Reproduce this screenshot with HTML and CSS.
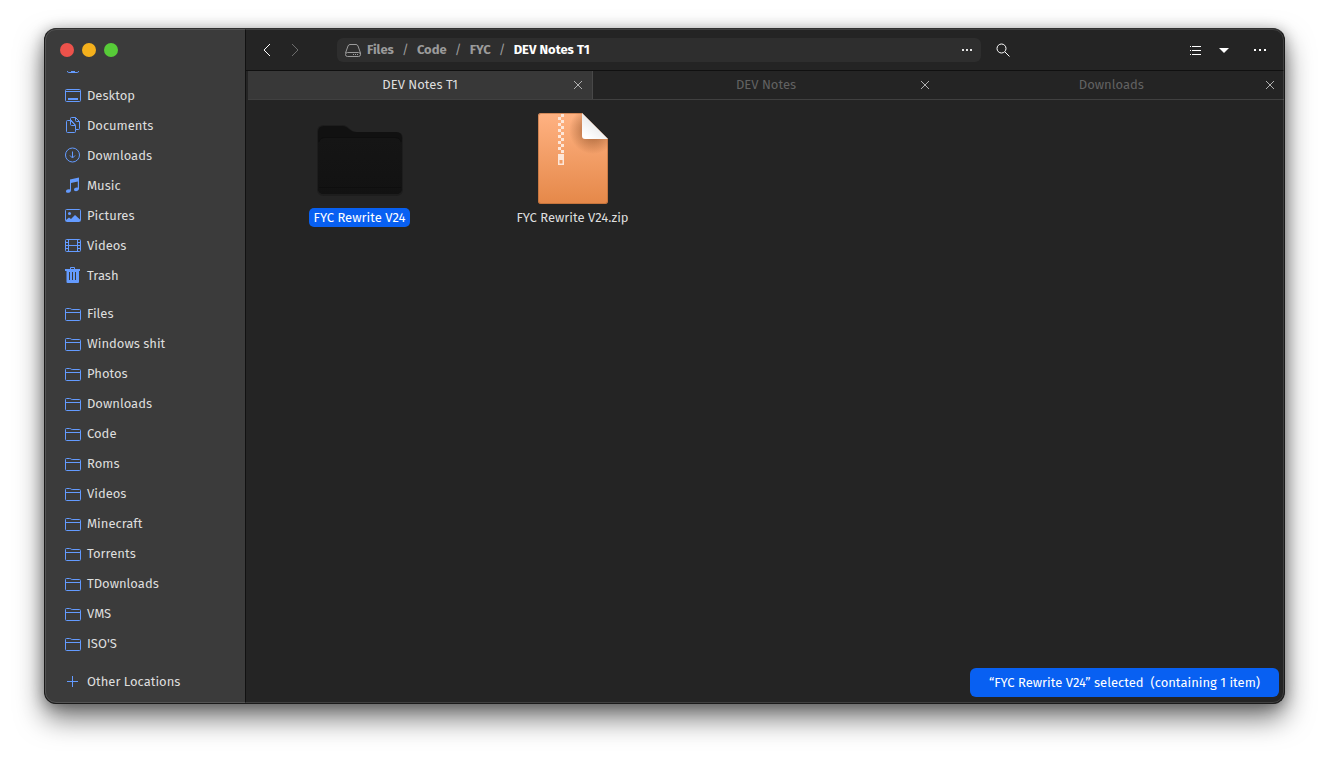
FILE: index.html
```html
<!DOCTYPE html>
<html lang="en">
<head>
<meta charset="utf-8">
<title>DEV Notes T1</title>
<link rel="stylesheet" href="styles.css">
</head>
<body>
<svg class="defs" aria-hidden="true">
  <symbol id="folder" viewBox="0 0 16 16"><path d="M.5 14.500v-10q0-1 1-1h3.200q.8 0 1.300.5t1.200.5h7.300q1 0 1 1v9q0 1-1 1h-13q-1 0-1-1zM1 7.500h14"/></symbol>
  <symbol id="close" viewBox="0 0 10 10"><path d="M1 1l8 8M9 1l-8 8"/></symbol>
</svg>
<div class="window">
  <aside class="sidebar">
    <div class="controls">
      <button class="dot red" aria-label="Close"></button>
      <button class="dot yellow" aria-label="Minimize"></button>
      <button class="dot green" aria-label="Maximize"></button>
    </div>
    <nav class="places" aria-label="Places">
      <div class="scroll">
        <ul class="group">
          <li><a class="place" href="#" aria-label="Home"><svg class="icon" viewBox="0 0 16 16"><path d="M1 8l7-7 7 7M2.500 7v7q0 1.500 1 1.500h9q1 0 1-1.500V7"/><path class="solid" d="M6 10h4v5H6z"/></svg></a></li>
          <li><a class="place" href="#"><svg class="icon" viewBox="0 0 16 16"><rect x=".5" y="2.500" width="15" height="12" rx="1"/><path d="M1 4.500h14"/><path class="solid" d="M3 11h10v2H3z"/></svg>Desktop</a></li>
          <li><a class="place" href="#"><svg class="icon" viewBox="0 0 16 16"><path d="M5.500 3.500h-3q-1 0-1 1v10q0 1 1 1h7q1 0 1-1v-2M5.500 3.500v-2q0-1 1-1h4l4 4v7q0 1-1 1h-3V8.500l-5-5M5.500 3.500v4q0 1 1 1h4M10.500.5v3q0 1 1 1h3M6 3l4.500 5"/></svg>Documents</a></li>
          <li><a class="place" href="#"><svg class="icon" viewBox="0 0 16 16"><circle cx="7.500" cy="8" r="7"/><path d="M7.500 4.500v6M5 8.500l2.500 2.500L10 8.500"/></svg>Downloads</a></li>
          <li><a class="place" href="#"><svg class="icon" viewBox="0 0 16 16"><path class="solid" d="M5 2.500L14 .5v11c0 3-5 3.500-5 1.200 0-1.700 2-2.400 3.800-2V4.500L6 6v7.200c0 3-5 3.500-5 1.200 0-1.800 2-2.500 4-2z"/></svg>Music</a></li>
          <li><a class="place" href="#"><svg class="icon" viewBox="0 0 16 16"><rect x=".5" y="2.500" width="15" height="12" rx="1"/><circle class="solid" cx="4.500" cy="6.500" r="1.500"/><path class="solid" d="M1 13l3-2.500 2 1.500 4-4 5 4.500V14H1z"/></svg>Pictures</a></li>
          <li><a class="place" href="#"><svg class="icon" viewBox="0 0 16 16"><rect x=".5" y="2.500" width="15" height="12" rx="1"/><path d="M3.500 2.500v12M12.500 2.500v12M3.500 8.500h9M1 5.500h2M1 8.500h2M1 11.500h2M13 5.500h2M13 8.500h2M13 11.500h2"/></svg>Videos</a></li>
          <li><a class="place" href="#"><svg class="icon" viewBox="0 0 16 16"><path class="solid" fill-rule="evenodd" d="M0 2h5V1q0-1 1-1h3q1 0 1 1v1h5v2h-1v11q0 1-1 1H2.500q-1 0-1-1V4H0zM6 1v1h3V1zM4 5v8h1V5zM7 5v8h1V5zM10 5v8h1V5z"/></svg>Trash</a></li>
        </ul>
        <ul class="group">
          <li><a class="place" href="#"><svg class="icon"><use href="#folder"/></svg>Files</a></li>
          <li><a class="place" href="#"><svg class="icon"><use href="#folder"/></svg>Windows shit</a></li>
          <li><a class="place" href="#"><svg class="icon"><use href="#folder"/></svg>Photos</a></li>
          <li><a class="place" href="#"><svg class="icon"><use href="#folder"/></svg>Downloads</a></li>
          <li><a class="place" href="#"><svg class="icon"><use href="#folder"/></svg>Code</a></li>
          <li><a class="place" href="#"><svg class="icon"><use href="#folder"/></svg>Roms</a></li>
          <li><a class="place" href="#"><svg class="icon"><use href="#folder"/></svg>Videos</a></li>
          <li><a class="place" href="#"><svg class="icon"><use href="#folder"/></svg>Minecraft</a></li>
          <li><a class="place" href="#"><svg class="icon"><use href="#folder"/></svg>Torrents</a></li>
          <li><a class="place" href="#"><svg class="icon"><use href="#folder"/></svg>TDownloads</a></li>
          <li><a class="place" href="#"><svg class="icon"><use href="#folder"/></svg>VMS</a></li>
          <li><a class="place" href="#"><svg class="icon"><use href="#folder"/></svg>ISO'S</a></li>
        </ul>
        <ul class="group">
          <li><a class="place" href="#"><svg class="icon" viewBox="0 0 16 16"><path d="M7.500 3v11M2 8.500h11"/></svg>Other Locations</a></li>
        </ul>
      </div>
    </nav>
  </aside>
  <main class="main">
    <header class="toolbar">
      <button class="tool" aria-label="Back"><svg class="glyph" viewBox="0 0 16 16"><path d="M11 2L5 8l6 6"/></svg></button>
      <button class="tool" aria-label="Forward" disabled><svg class="glyph" viewBox="0 0 16 16"><path d="M5 2l6 6-6 6"/></svg></button>
      <nav class="pathbar" aria-label="Path">
        <svg class="drive" viewBox="0 0 16 16"><path d="M.5 11L3 4q.6-1.500 2-1.500h6q1.400 0 2 1.500l2.500 7v1.500q0 2-2 2h-11q-2 0-2-2 0-2 2-2h11q2 0 2 2"/><path d="M8 12.500h1M10 12.500h1M12 12.500h1"/></svg>
        <a class="crumb" href="#">Files</a><span class="slash">/</span>
        <a class="crumb" href="#">Code</a><span class="slash">/</span>
        <a class="crumb" href="#">FYC</a><span class="slash">/</span>
        <a class="crumb current" href="#" aria-current="page">DEV Notes T1</a>
        <button class="more" aria-label="Folder menu"><svg class="glyph" viewBox="0 0 16 16"><path class="solid" d="M3 7h2v2H3zM7 7h2v2H7zM11 7h2v2h-2z"/></svg></button>
      </nav>
      <button class="tool search" aria-label="Search"><svg class="glyph" viewBox="0 0 16 16"><circle cx="6.500" cy="6.500" r="4.500"/><path d="M10 10l4.500 4.500"/></svg></button>
      <div class="views">
        <button class="tool" aria-label="List view"><svg class="glyph" viewBox="0 0 16 16"><path d="M2 4.500h1M4 4.500h9M2 8.500h1M4 8.500h9M2 12.500h1M4 12.500h9"/></svg></button>
        <button class="tool" aria-label="View options"><svg class="glyph" viewBox="0 0 16 16"><path class="solid" d="M3 6h10l-5 5z"/></svg></button>
        <button class="tool menu" aria-label="Menu"><svg class="glyph" viewBox="0 0 16 16"><path class="solid" d="M2 7h2v2H2zM7 7h2v2H7zM12 7h2v2h-2z"/></svg></button>
      </div>
    </header>
    <div class="tabs">
      <div class="tab active"><button class="title">DEV Notes T1</button><button class="close" aria-label="Close DEV Notes T1"><svg class="cross"><use href="#close"/></svg></button></div>
      <div class="tab"><button class="title">DEV Notes</button><button class="close" aria-label="Close DEV Notes"><svg class="cross"><use href="#close"/></svg></button></div>
      <div class="tab"><button class="title">Downloads</button><button class="close" aria-label="Close Downloads"><svg class="cross"><use href="#close"/></svg></button></div>
    </div>
    <section class="files" aria-label="Files">
      <a class="file selected" href="#">
        <svg class="thumb" viewBox="0 0 96 96">
          <defs><linearGradient id="front" x2="0" y2="1"><stop offset="0" stop-color="#151515"/><stop offset="1" stop-color="#121212"/></linearGradient></defs>
          <path fill="#1d1d1d" d="M5 22q0-7 7-7h18c7 0 8 7 15 7h39q7 0 7 7v50q0 7-7 7H12q-7 0-7-7z"/>
          <path fill="#111" d="M6 22q0-6 6-6h18c7 0 7 6 14 6h40q6 0 6 6v50q0 6-6 6H12q-6 0-6-6z"/>
          <rect x="6" y="28" width="84" height="56" rx="6" fill="url(#front)"/>
          <path stroke="#0e0e0e" fill="none" d="M7 32q1-4.500 6-4.500h70q5 0 6 4.500M7 77.500h82"/>
        </svg>
        <span class="name">FYC Rewrite V24</span>
      </a>
      <a class="file" href="#">
        <svg class="thumb" viewBox="0 0 96 96">
          <defs>
            <linearGradient id="paper" x2="0" y2="1"><stop offset="0" stop-color="#ffb282"/><stop offset="1" stop-color="#e58849"/></linearGradient>
            <linearGradient id="fold" x1="1" y1="0" x2="0.300" y2="1"><stop offset="0" stop-color="#d8d8d8"/><stop offset="1" stop-color="#fff"/></linearGradient>
            <radialGradient id="shade"><stop offset=".3" stop-color="#7a4019" stop-opacity=".5"/><stop offset="1" stop-color="#7a4019" stop-opacity="0"/></radialGradient>
            <clipPath id="sheet"><path d="M13 6q0-3 3-3h41l26 26v62q0 3-3 3H16q-3 0-3-3z"/></clipPath>
          </defs>
          <g clip-path="url(#sheet)">
            <path fill="url(#paper)" d="M13 3h70v91H13z"/>
            <circle cx="68" cy="20" r="24" fill="url(#shade)"/>
          </g>
          <path d="M57 3l26 26H60q-3 0-3-3z" fill="url(#fold)"/>
          <path d="M34.500 4v39" stroke="#fde6d8" stroke-width="3" stroke-dasharray="3 3" stroke-dashoffset="3"/>
          <path d="M37.500 4v39" stroke="#fde6d8" stroke-width="3" stroke-dasharray="3 3"/>
          <path fill="#fde6d8" fill-rule="evenodd" d="M33 44h6v11h-6zM34.500 50v3.500h3V50z"/>
          <path d="M13.500 6q0-2.500 2.500-2.500h41M82.500 29v62q0 2.500-2.500 2.500H16q-2.500 0-2.500-2.500V6" fill="none" stroke="#a85f30" stroke-opacity=".5"/>
        </svg>
        <span class="name">FYC Rewrite V24.zip</span>
      </a>
    </section>
    <div class="status" role="status">“FYC Rewrite V24” selected&nbsp; (containing 1 item)</div>
  </main>
</div>
</body>
</html>
```
FILE: styles.css
```css
* { box-sizing: border-box; }

body {
  margin: 0;
  height: 100vh;
  padding: 28px 44px 60px;
  background: #fff;
  font: 13px/20px "Fira Sans", Roboto, sans-serif;
  color: #dedede;
}

button {
  border: 0;
  padding: 0;
  background: none;
  color: inherit;
  font: inherit;
}

a { color: inherit; text-decoration: none; }

.defs { display: none; }

.window {
  position: relative;
  display: flex;
  height: 100%;
  border: 1px solid #1a1a1a;
  border-top-color: #303030;
  border-radius: 12px;
  overflow: hidden;
  background: #242424;
  box-shadow: 0 14px 28px rgba(0, 0, 0, .55), 0 2px 14px rgba(0, 0, 0, .3);
}

.window::after {
  content: "";
  position: absolute;
  inset: 0;
  border: 1px solid rgba(255, 255, 255, .13);
  border-radius: 11px;
  pointer-events: none;
}

.sidebar {
  display: flex;
  flex-direction: column;
  flex: none;
  width: 201px;
  border-right: 1px solid #111;
  background: #3b3b3b;
}

.controls {
  display: flex;
  flex: none;
  align-items: center;
  gap: 8px;
  height: 42px;
  padding-left: 15px;
}

.dot { width: 14px; height: 14px; border-radius: 50%; }
.red { background: #ec524b; }
.yellow { background: #f4b01c; }
.green { background: #57cb38; }

.places { flex: 1; overflow: hidden; }

.scroll {
  display: flex;
  flex-direction: column;
  gap: 8px;
  margin-top: -20px;
}

.group { margin: 0; padding: 0; list-style: none; }

.place {
  display: flex;
  align-items: center;
  gap: 6px;
  height: 30px;
  padding-left: 20px;
}

.icon {
  width: 16px;
  height: 16px;
  margin-bottom: 2px;
  fill: none;
  stroke: #649bff;
}

.icon .solid { fill: #649bff; stroke: none; }

.main {
  position: relative;
  display: flex;
  flex: 1;
  flex-direction: column;
  min-width: 0;
}

.toolbar {
  display: flex;
  flex: none;
  align-items: center;
  height: 42px;
  padding: 0 10px 0 7px;
  border-bottom: 1px solid #101010;
}

.tool {
  display: grid;
  flex: none;
  place-items: center;
  width: 28px;
  height: 28px;
  color: #fff;
}

.tool:disabled { color: #6c6c6c; }

.glyph {
  width: 16px;
  height: 16px;
  fill: none;
  stroke: currentColor;
}

.glyph .solid { fill: currentColor; stroke: none; }

.pathbar {
  display: flex;
  flex: 0 1 644px;
  align-items: center;
  min-width: 0;
  height: 24px;
  margin-left: 28px;
  padding: 0 6px 0 8px;
  border-radius: 6px;
  background: #2e2e2e;
  color: #9b9b9b;
  white-space: nowrap;
}

.drive {
  flex: none;
  width: 16px;
  height: 16px;
  margin-right: 6px;
  fill: none;
  stroke: #9b9b9b;
}

.crumb { font-weight: 700; }
.current { color: #fff; }
.slash { width: 23px; text-align: center; }

.more { display: flex; margin-left: auto; color: #e4e4e4; }
.search { margin-left: 8px; }

.views { display: flex; margin-left: auto; }
.menu { margin-left: 8px; }

.tabs {
  display: grid;
  flex: none;
  grid-template-columns: repeat(3, 1fr);
  height: 29px;
  margin-left: 2px;
  border-bottom: 1px solid #404040;
}

.tab {
  display: grid;
  grid-template-columns: 1fr 28px;
  padding-left: 28px;
  color: #626262;
}

.active {
  border-right: 1px solid #484848;
  background: #383838;
  color: #dedede;
}

.title { padding-bottom: 1px; }
.close { display: grid; place-items: center; color: #b0b0b0; }
.cross { width: 10px; height: 10px; stroke: currentColor; }

.files {
  display: grid;
  grid-template-columns: repeat(auto-fill, 213px);
  padding: 10px 7px;
}

.file { display: flex; flex-direction: column; align-items: center; }
.thumb { width: 96px; height: 96px; }

.name {
  margin-top: 2px;
  padding: 0 5px;
  border-radius: 5px;
  line-height: 19px;
}

.selected .name { background: #0860f2; color: #fff; }

.status {
  position: absolute;
  right: 5px;
  bottom: 6px;
  padding: 5px 19px 4px;
  border-radius: 6px;
  background: #0860f2;
  color: #fff;
}
```
